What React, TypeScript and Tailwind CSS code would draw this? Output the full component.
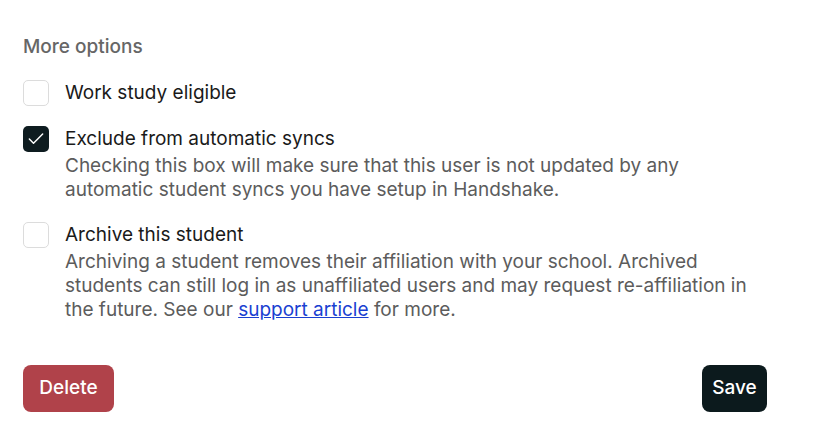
import { Check } from "lucide-react";

function Box({ checked }: { checked?: boolean }) {
  return checked ? (
    <div className="w-[26px] h-[26px] shrink-0 rounded-[5px] bg-[#0e1c20] flex items-center justify-center">
      <Check className="w-[20px] h-[20px] text-white" strokeWidth={1.75} />
    </div>
  ) : (
    <div className="w-[26px] h-[26px] shrink-0 rounded-[5px] border border-[#dcdcdc] bg-white" />
  );
}

function Option({
  checked,
  title,
  children,
}: {
  checked?: boolean;
  title: string;
  children?: React.ReactNode;
}) {
  return (
    <div className="flex gap-4">
      <Box checked={checked} />
      <div>
        <div className="text-[19px] leading-[26px] text-[#1a1a1a]">{title}</div>
        {children && (
          <div className="mt-[2px] text-[19px] leading-[24px] text-[#5c5c5c]">{children}</div>
        )}
      </div>
    </div>
  );
}

export default function App() {
  return (
    <div
      className="w-[816px] h-[442px] bg-white pl-[23px] pr-[49px] pt-[34px]"
      style={{ fontFamily: "Inter, 'Liberation Sans', sans-serif" }}
    >
      <div className="text-[19px] leading-[25px] font-medium text-[#666666]">More options</div>
      <div className="mt-[21px] flex flex-col gap-[20px]">
        <Option title="Work study eligible" />
        <Option checked title="Exclude from automatic syncs">
          Checking this box will make sure that this user is not updated by any
          <br />
          automatic student syncs you have setup in Handshake.
        </Option>
        <Option title="Archive this student">
          Archiving a student removes their affiliation with your school. Archived
          <br />
          students can still log in as unaffiliated users and may request re-affiliation in
          <br />
          the future. See our{" "}
          <a href="#" className="text-[#1a3fd1] underline">
            support article
          </a>{" "}
          for more.
        </Option>
      </div>
      <div className="mt-[43px] flex justify-between">
        <button className="h-[47px] w-[91px] rounded-[8px] bg-[#b0424a] text-white text-[19px] font-medium">
          Delete
        </button>
        <button className="h-[47px] w-[65px] rounded-[8px] bg-[#0c1a1d] text-white text-[19px] font-medium">
          Save
        </button>
      </div>
    </div>
  );
}
